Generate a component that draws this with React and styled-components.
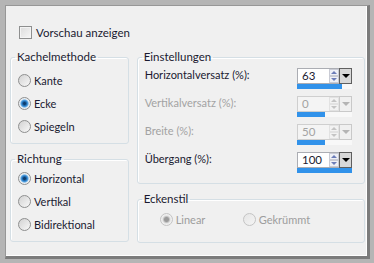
import React from 'react';
import styled, {createGlobalStyle} from 'styled-components';

const GlobalStyle = createGlobalStyle`
  html, body {
    margin: 0;
    padding: 0;
    background: #b5b5b5;
  }
  body {
    font-family: Lato, "Liberation Sans", sans-serif;
    font-size: 11px;
    color: #1a1a30;
  }
`

const Frame = styled.div`
  width: 374px;
  height: 263px;
  box-sizing: border-box;
  padding: 5px 4px 4px 5px;
  background: #b5b5b5;
`
const Panel = styled.div`
  height: 100%;
  box-sizing: border-box;
  background: #f0f0f0;
  border-top: 1px solid #979797;
  border-left: 1px solid #979797;
  border-right: 3px solid #7c7c7c;
  border-bottom: 3px solid #7c7c7c;
  box-shadow: inset -1px -1px 0 #ffffff;
  padding: 20px 2px 0 4px;
  display: flex;
  flex-direction: column;
`
const CheckRow = styled.label`
  display: flex;
  align-items: center;
  gap: 4px;
  height: 13px;
  margin-left: 9px;
  font-size: 11.5px;
`
const CheckBox = styled.span`
  width: 11px;
  height: 11px;
  border: 1px solid #8e8f8f;
  background: linear-gradient(135deg, #dcdcdc, #f6f6f6);
  box-shadow: inset 0 0 0 1px #f4f4f4;
`
const Columns = styled.div`
  display: flex;
  gap: 8px;
  margin-top: 11px;
`
const Column = styled.div`
  display: flex;
  flex-direction: column;
  gap: 8px;
  width: ${p => p.$width}px;
`
const Group = styled.fieldset`
  margin: 0;
  padding: 0;
  min-width: 0;
  height: ${p => p.$height}px;
  box-sizing: border-box;
  border: 1px solid #d5dfe5;
  border-radius: 3px;
  box-shadow: inset 1px 1px 0 #ffffff;
`
const Legend = styled.legend`
  margin-left: 4px;
  padding: 0 2px;
  line-height: 14px;
  font-size: 11.5px;
  color: #1a1a30;
`
const GroupBody = styled.div`
  padding: ${p => p.$top}px 0 0 ${p => p.$left}px;
`
const RadioRow = styled.label`
  display: flex;
  align-items: center;
  gap: 3px;
  height: 23px;
  color: ${p => (p.$disabled ? '#9d9d9d' : 'inherit')};
`
const Radio = styled.span`
  width: 11px;
  height: 11px;
  border-radius: 50%;
  border: 1px solid ${p => (p.$disabled ? '#c4c4c4' : '#8e8f8f')};
  background: ${p =>
    p.$checked
      ? p.$disabled
        ? 'radial-gradient(circle, #9a9a9a 0 2px, #c2c2c2 3px, #e6e6e6 4px, #f0f0f0 5px)'
        : 'radial-gradient(circle, #0d3d6e 0 1px, #2a7bc4 2.5px, #5aa8e6 3.5px, #e4eaf0 4.5px, #f6f6f6 6px)'
      : p.$disabled
        ? 'linear-gradient(135deg, #e6e6e6, #f4f4f4)'
        : 'linear-gradient(135deg, #d2d2d2, #f8f8f8)'};
`
const HRadios = styled.div`
  display: grid;
  grid-template-columns: 83px auto;
`
const SetRow = styled.div`
  display: flex;
  justify-content: space-between;
  height: 28px;
  padding-right: 12px;
  &:last-child {
    height: 29px;
  }
`
const SetLabel = styled.span`
  line-height: 14px;
  color: ${p => (p.$disabled ? '#a3a3a3' : 'inherit')};
`
const Spin = styled.div`
  display: flex;
  flex-direction: column;
  width: 55px;
`
const SpinTop = styled.div`
  display: flex;
  height: 16px;
`
const SpinInput = styled.div`
  width: 32px;
  box-sizing: border-box;
  border: 1px solid ${p => (p.$disabled ? '#cfcfcf' : '#abadb3')};
  border-right: none;
  background: ${p => (p.$disabled ? '#f4f4f4' : '#ffffff')};
  color: ${p => (p.$disabled ? '#a3a3a3' : '#1a1a30')};
  padding-left: 4px;
  line-height: 14px;
  font-size: 11.5px;
`
const Arrows = styled.div`
  width: 10px;
  display: flex;
  flex-direction: column;
  border-top: 1px solid ${p => (p.$disabled ? '#cfcfcf' : '#abadb3')};
  border-bottom: 1px solid ${p => (p.$disabled ? '#cfcfcf' : '#abadb3')};
  background: ${p => (p.$disabled ? '#f4f4f4' : '#ffffff')};
`
const ArrowBtn = styled.span`
  flex: 1;
  display: flex;
  align-items: center;
  justify-content: center;
  border: 1px solid ${p => (p.$disabled ? '#e2e2e2' : '#c9cbd4')};
  background: ${p => (p.$disabled ? '#f2f2f2' : '#eef0f6')};
  &::after {
    content: '';
    border-left: 3px solid transparent;
    border-right: 3px solid transparent;
    ${p => (p.$down ? 'border-top' : 'border-bottom')}: 3px solid ${p => (p.$disabled ? '#c4c4c4' : '#6c7db8')};
  }
`
const DropBtn = styled.span`
  width: 13px;
  box-sizing: border-box;
  display: flex;
  align-items: center;
  justify-content: center;
  border: 1px solid ${p => (p.$disabled ? '#c9c9c9' : '#5f5f5f')};
  background: ${p => (p.$disabled ? '#f0f0f0' : '#d8d8d8')};
  &::after {
    content: '';
    border-left: 4px solid transparent;
    border-right: 4px solid transparent;
    border-top: 4px solid ${p => (p.$disabled ? '#b4b4b4' : '#000000')};
  }
`
const Bar = styled.div`
  height: 5px;
  background: #f8f8f8;
`
const BarFill = styled.div`
  height: 100%;
  background: #3192ea;
`

const settings = [
  {label: 'Horizontalversatz (%):', value: '63', fill: 45},
  {label: 'Vertikalversatz (%):', value: '0', fill: 28, disabled: true},
  {label: 'Breite (%):', value: '50', fill: 28, disabled: true},
  {label: 'Übergang (%):', value: '100', fill: 55}
]

const SpinBox = ({value, fill, disabled}) => (
  <Spin>
    <SpinTop>
      <SpinInput $disabled={disabled}>{value}</SpinInput>
      <Arrows $disabled={disabled}>
        <ArrowBtn $disabled={disabled}/>
        <ArrowBtn $disabled={disabled} $down/>
      </Arrows>
      <DropBtn $disabled={disabled}/>
    </SpinTop>
    <Bar>
      <BarFill style={{width: fill}}/>
    </Bar>
  </Spin>
)

const RadioItem = ({label, checked, disabled}) => (
  <RadioRow $disabled={disabled}>
    <Radio $checked={checked} $disabled={disabled}/>
    {label}
  </RadioRow>
)

export default function App() {
  return (
    <Frame>
      <GlobalStyle/>
      <Panel>
        <CheckRow>
          <CheckBox/>
          Vorschau anzeigen
        </CheckRow>
        <Columns>
          <Column $width={119}>
            <Group $height={94}>
              <Legend>Kachelmethode</Legend>
              <GroupBody $top={5} $left={7}>
                <RadioItem label="Kante"/>
                <RadioItem label="Ecke" checked/>
                <RadioItem label="Spiegeln"/>
              </GroupBody>
            </Group>
            <Group $height={90}>
              <Legend>Richtung</Legend>
              <GroupBody $top={1} $left={7}>
                <RadioItem label="Horizontal" checked/>
                <RadioItem label="Vertikal"/>
                <RadioItem label="Bidirektional"/>
              </GroupBody>
            </Group>
          </Column>
          <Column $width={229}>
            <Group $height={134}>
              <Legend>Einstellungen</Legend>
              <GroupBody $top={4} $left={7}>
                {settings.map(s => (
                  <SetRow key={s.label}>
                    <SetLabel $disabled={s.disabled}>{s.label}</SetLabel>
                    <SpinBox value={s.value} fill={s.fill} disabled={s.disabled}/>
                  </SetRow>
                ))}
              </GroupBody>
            </Group>
            <Group $height={51}>
              <Legend>Eckenstil</Legend>
              <GroupBody $top={2} $left={22}>
                <HRadios>
                  <RadioItem label="Linear" checked disabled/>
                  <RadioItem label="Gekrümmt" disabled/>
                </HRadios>
              </GroupBody>
            </Group>
          </Column>
        </Columns>
      </Panel>
    </Frame>
  );
}
